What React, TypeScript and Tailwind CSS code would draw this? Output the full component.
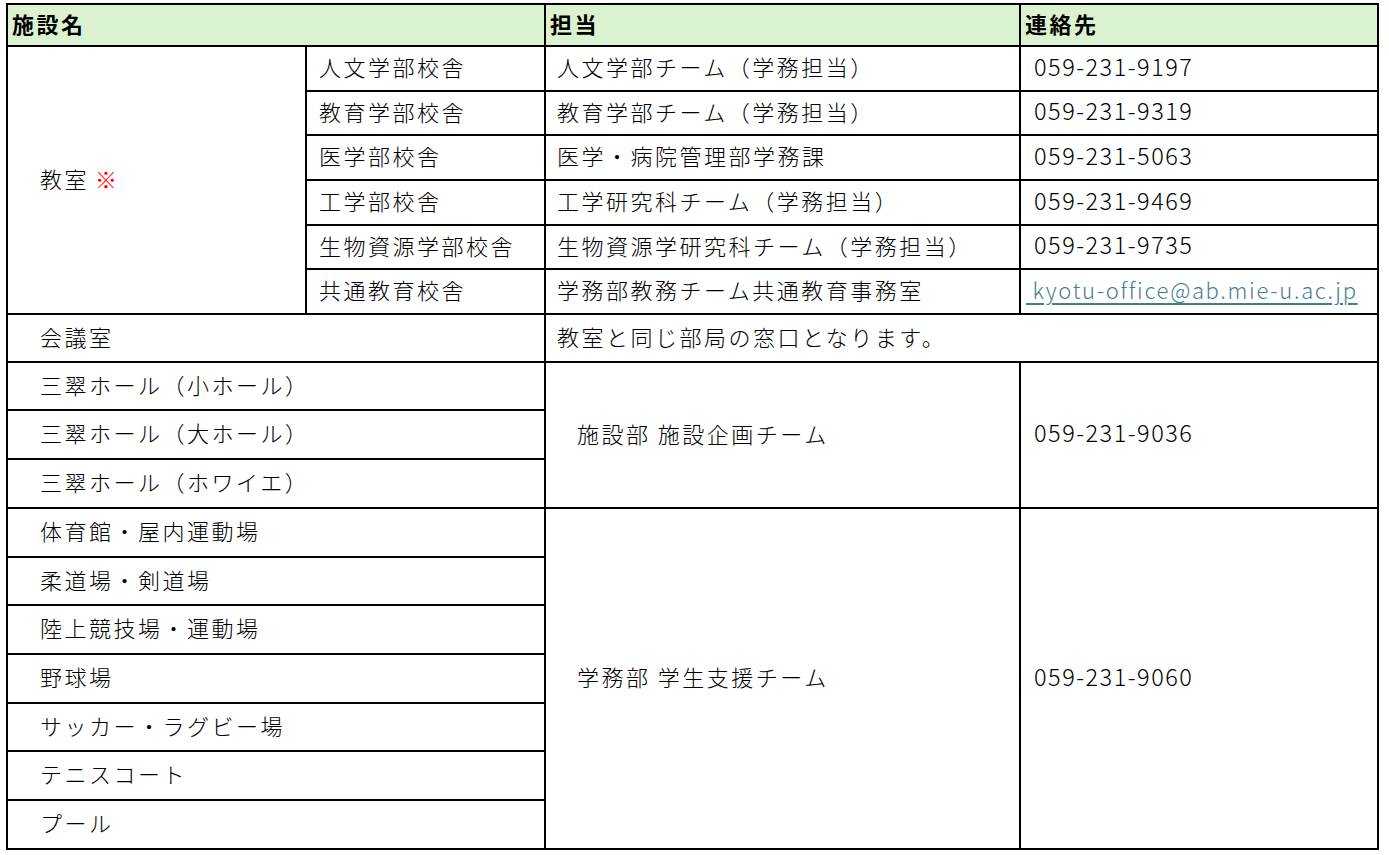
import React from "react";

const font = { fontFamily: '"Noto Sans CJK JP", "Noto Sans", sans-serif' };

function Cell({
  className = "",
  children,
}: {
  className?: string;
  children?: React.ReactNode;
}) {
  return (
    <div className={`bg-white flex items-center pb-[4px] text-[22px] tracking-[2.5px] text-black ${className}`}>
      {children}
    </div>
  );
}

function Phone({ children }: { children: React.ReactNode }) {
  return <span className="text-[23.5px] tracking-[1.5px]">{children}</span>;
}

const classrooms = [
  ["人文学部校舎", "人文学部チーム（学務担当）", "059-231-9197"],
  ["教育学部校舎", "教育学部チーム（学務担当）", "059-231-9319"],
  ["医学部校舎", "医学・病院管理部学務課", "059-231-5063"],
  ["工学部校舎", "工学研究科チーム（学務担当）", "059-231-9469"],
  ["生物資源学部校舎", "生物資源学研究科チーム（学務担当）", "059-231-9735"],
];

const halls = ["三翠ホール（小ホール）", "三翠ホール（大ホール）", "三翠ホール（ホワイエ）"];

const sports = [
  "体育館・屋内運動場",
  "柔道場・剣道場",
  "陸上競技場・運動場",
  "野球場",
  "サッカー・ラグビー場",
  "テニスコート",
  "プール",
];

export default function App() {
  return (
    <div className="w-[1389px] h-[855px] bg-white font-light" style={font}>
      <div className="ml-[6px] pt-[3px]">
        <div className="inline-grid bg-black p-[2px] gap-[2px] grid-cols-[297px_237px_473px_356px] grid-rows-[40px_43px_42px_43px_43px_42px_43px_46px_46px_47px_47px_47px_46px_47px_47px_46px_47px_47px]">
          {/* header */}
          <div className="col-span-2 bg-[#daf2d0] flex items-center pl-[4px] pb-[4px] text-[22px] tracking-[2.5px] font-bold">施設名</div>
          <div className="bg-[#daf2d0] flex items-center pl-[4px] pb-[4px] text-[22px] tracking-[2.5px] font-bold">担当</div>
          <div className="bg-[#daf2d0] flex items-center pl-[4px] pb-[4px] text-[22px] tracking-[2.5px] font-bold">連絡先</div>

          {/* classrooms */}
          <Cell className="row-span-6 pl-[32px]">
            教室 <span className="text-[#ff0000] ml-[6px]">※</span>
          </Cell>
          {classrooms.map(([name, dept, tel]) => (
            <React.Fragment key={name}>
              <Cell className="pl-[12px]">{name}</Cell>
              <Cell className="pl-[11px]">{dept}</Cell>
              <Cell className="pl-[13px]">
                <Phone>{tel}</Phone>
              </Cell>
            </React.Fragment>
          ))}
          <Cell className="pl-[12px]">共通教育校舎</Cell>
          <Cell className="pl-[11px]">学務部教務チーム共通教育事務室</Cell>
          <Cell className="pl-[5px]">
            <span className="text-[22px] tracking-[1.7px] text-[#467e8e] underline underline-offset-[4px] decoration-[1.5px] whitespace-pre">
              {" kyotu-office@ab.mie-u.ac.jp"}
            </span>
          </Cell>

          {/* meeting room */}
          <Cell className="col-span-2 pl-[32px]">会議室</Cell>
          <Cell className="col-span-2 pl-[11px]">教室と同じ部局の窓口となります。</Cell>

          {/* halls */}
          <Cell className="col-span-2 pl-[32px]">{halls[0]}</Cell>
          <Cell className="row-span-3 pl-[31px]">施設部 施設企画チーム</Cell>
          <Cell className="row-span-3 pl-[13px]">
            <Phone>059-231-9036</Phone>
          </Cell>
          {halls.slice(1).map((h) => (
            <Cell key={h} className="col-span-2 pl-[32px]">
              {h}
            </Cell>
          ))}

          {/* sports */}
          <Cell className="col-span-2 pl-[32px]">{sports[0]}</Cell>
          <Cell className="row-span-7 pl-[31px]">学務部 学生支援チーム</Cell>
          <Cell className="row-span-7 pl-[13px]">
            <Phone>059-231-9060</Phone>
          </Cell>
          {sports.slice(1).map((s) => (
            <Cell key={s} className="col-span-2 pl-[32px]">
              {s}
            </Cell>
          ))}
        </div>
      </div>
    </div>
  );
}
